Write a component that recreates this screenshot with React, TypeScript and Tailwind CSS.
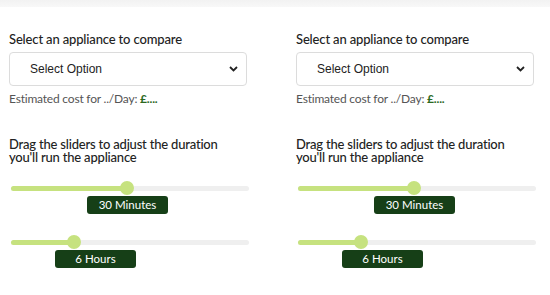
type Slider = { label: string; thumb: number; tag: number };

const sliders: Slider[] = [
  { label: "30 Minutes", thumb: 116, tag: 78 },
  { label: "6 Hours", thumb: 63, tag: 46 },
];

function Chevron() {
  return (
    <svg width="9" height="6" viewBox="0 0 9 6" className="text-[#222]">
      <path d="M1 1l3.5 3.5L8 1" fill="none" stroke="currentColor" strokeWidth="1.8" />
    </svg>
  );
}

function DurationSlider({ s, first }: { s: Slider; first: boolean }) {
  return (
    <div className={first ? "mt-[17px]" : "mt-[21px]"}>
      {/* track + thumb */}
      <div className="relative ml-[2px] h-[14px] w-[238px]">
        <div className="absolute top-[5px] left-0 h-[5px] w-full rounded-full bg-[#efefef]" />
        <div
          className="absolute top-[5px] left-0 h-[5px] rounded-full bg-[#c6e27f]"
          style={{ width: s.thumb }}
        />
        <div
          className="absolute top-0 h-[14px] w-[14px] -translate-x-1/2 rounded-full bg-[#c6e27f]"
          style={{ left: s.thumb }}
        />
      </div>
      <div
        className="mt-[1px] flex h-[18px] w-[81px] items-center justify-center rounded-[3px] bg-[#163f17] text-[11.5px] text-white"
        style={{ marginLeft: s.tag }}
      >
        {s.label}
      </div>
    </div>
  );
}

function Compare() {
  return (
    <div className="w-[238px]">
      <p className="text-[13px] leading-[16px] font-medium tracking-[-0.15px] text-[#222]">
        Select an appliance to compare
      </p>

      <div className="mt-[5px] flex h-[34px] items-center justify-between rounded-[4px] border border-[#dcdcdc] bg-white pr-[8px] pl-[20px]">
        <span className="font-['Liberation_Sans',Arial,sans-serif] text-[12px] text-[#222]">Select Option</span>
        <Chevron />
      </div>

      <p className="mt-[5px] text-[12px] leading-[16px] tracking-[-0.2px] text-[#555]">
        Estimated cost for ../Day: <span className="font-bold text-[#2c6a1f]">£....</span>
      </p>

      <p className="mt-[31px] max-w-[226px] text-[13px] leading-[13px] font-medium tracking-[-0.2px] text-[#222]">
        Drag the sliders to adjust the duration you'll run the appliance
      </p>

      {sliders.map((s, i) => (
        <DurationSlider key={s.label} s={s} first={i === 0} />
      ))}
    </div>
  );
}

export default function App() {
  return (
    <div className="h-[295px] w-[550px] overflow-hidden bg-white font-['Lato',sans-serif]">
      <div className="h-[7px] bg-gradient-to-b from-[#f2f2f2] to-[#f8f8f8]" />
      <div className="grid grid-cols-[238px_238px] gap-x-[49px] pt-[24px] pl-[9px]">
        <Compare />
        <Compare />
      </div>
    </div>
  );
}
